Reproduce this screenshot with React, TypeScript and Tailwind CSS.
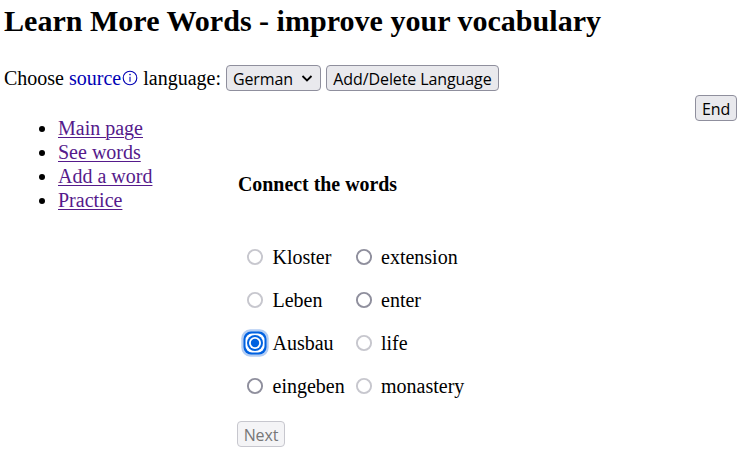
const links = ['Main page', 'See words', 'Add a word', 'Practice'];

type State = 'off' | 'on' | 'done';

const rows: { left: string; leftState: State; right: string; rightState: State }[] = [
  { left: 'Kloster', leftState: 'done', right: 'extension', rightState: 'off' },
  { left: 'Leben', leftState: 'done', right: 'enter', rightState: 'off' },
  { left: 'Ausbau', leftState: 'on', right: 'life', rightState: 'done' },
  { left: 'eingeben', leftState: 'off', right: 'monastery', rightState: 'done' },
];

const button =
  "rounded-[4px] border border-[#8f8f9d] bg-[#e9e9ed] font-['Open_Sans',sans-serif] text-[16px] leading-[22px] tracking-[-0.1px] pt-[2px] h-[26px] whitespace-nowrap";

function Radio({ state }: { state: State }) {
  return (
    <svg className="h-7 w-7 shrink-0" viewBox="0 0 28 28" fill="none">
      {state === 'on' ? (
        <>
          <rect x="0.3" y="0.3" width="27.4" height="27.4" rx="9" fill="#b3cdf3" />
          <rect x="2.5" y="2.5" width="23" height="23" rx="7.5" fill="#0061e0" />
          <rect x="4.5" y="4.5" width="19" height="19" rx="6.5" fill="white" />
          <circle cx="14" cy="14" r="8" fill="#0061e0" />
          <circle cx="14" cy="14" r="6" fill="white" />
          <circle cx="14" cy="14" r="4.2" fill="#0061e0" />
        </>
      ) : (
        <circle cx="14" cy="14" r="7.1" strokeWidth="1.9" stroke={state === 'done' ? '#c7c7ce' : '#8f8f9d'} />
      )}
    </svg>
  );
}

export default function App() {
  return (
    <div className="h-[454px] w-[754px] overflow-hidden bg-white pl-1 font-['Liberation_Serif',serif] text-[20px] leading-6 text-black">
      <h1 className="pt-[4px] text-[30.06px] leading-[34px] font-bold whitespace-nowrap">
        Learn More Words - improve your vocabulary
      </h1>
      <div className="mt-[27px] flex h-[26px] items-center whitespace-nowrap">
        <span>Choose&nbsp;</span>
        <span className="text-[#0000b4]">source</span>
        <svg className="h-4 w-[17px]" viewBox="0 0 17 16" fill="none" stroke="#0000b4">
          <circle cx="9" cy="8" r="6.8" strokeWidth="1.1" />
          <path d="M9 6.7v5" strokeWidth="1.1" />
          <circle cx="9" cy="4.6" r="0.8" fill="#0000b4" stroke="none" />
        </svg>
        <span>&nbsp;language:</span>
        <button className={`${button} ml-[5px] flex w-[95px] items-center justify-between pr-[7px] pl-[6px]`}>
          German
          <svg className="mt-[-2px] h-3 w-3" viewBox="0 0 12 12" fill="none" stroke="black" strokeWidth="1.8">
            <path d="M1.5 4 6 8.5 10.5 4" />
          </svg>
        </button>
        <button className={`${button} ml-[5px] w-[173px]`}>Add/Delete Language</button>
      </div>
      <div className="mt-1 flex h-[26px] justify-end pr-[17px]">
        <button className={`${button} w-[42px]`}>End</button>
      </div>
      <div className="flex">
        <ul className="mt-[-5px] w-[233px] list-disc pl-[54px] text-black">
          {links.map((link) => (
            <li key={link}>
              <a className="text-[#551a8b] underline decoration-1 underline-offset-2" href="#">{link}</a>
            </li>
          ))}
        </ul>
        <main className="pt-[51px]">
          <h2 className="pl-[1px] text-[19.9px] font-bold">Connect the words</h2>
          <div className="mt-[39px] grid grid-cols-[109px_130px] pl-1">
            {rows.map((row) => (
              <div className="contents" key={row.left}>
                <label className="flex h-[43px] items-center gap-[3.5px]"><Radio state={row.leftState} />{row.left}</label>
                <label className="flex h-[43px] items-center gap-[3px]"><Radio state={row.rightState} />{row.right}</label>
              </div>
            ))}
          </div>
          <button disabled className="mt-[14px] block h-[26px] w-12 rounded-[4px] border border-[#c7c7ce] bg-[#f4f4f6] pt-[2px] font-['Open_Sans',sans-serif] text-[16px] leading-[22px] tracking-[-0.1px] text-[#777]">Next</button>
        </main>
      </div>
    </div>
  );
}
